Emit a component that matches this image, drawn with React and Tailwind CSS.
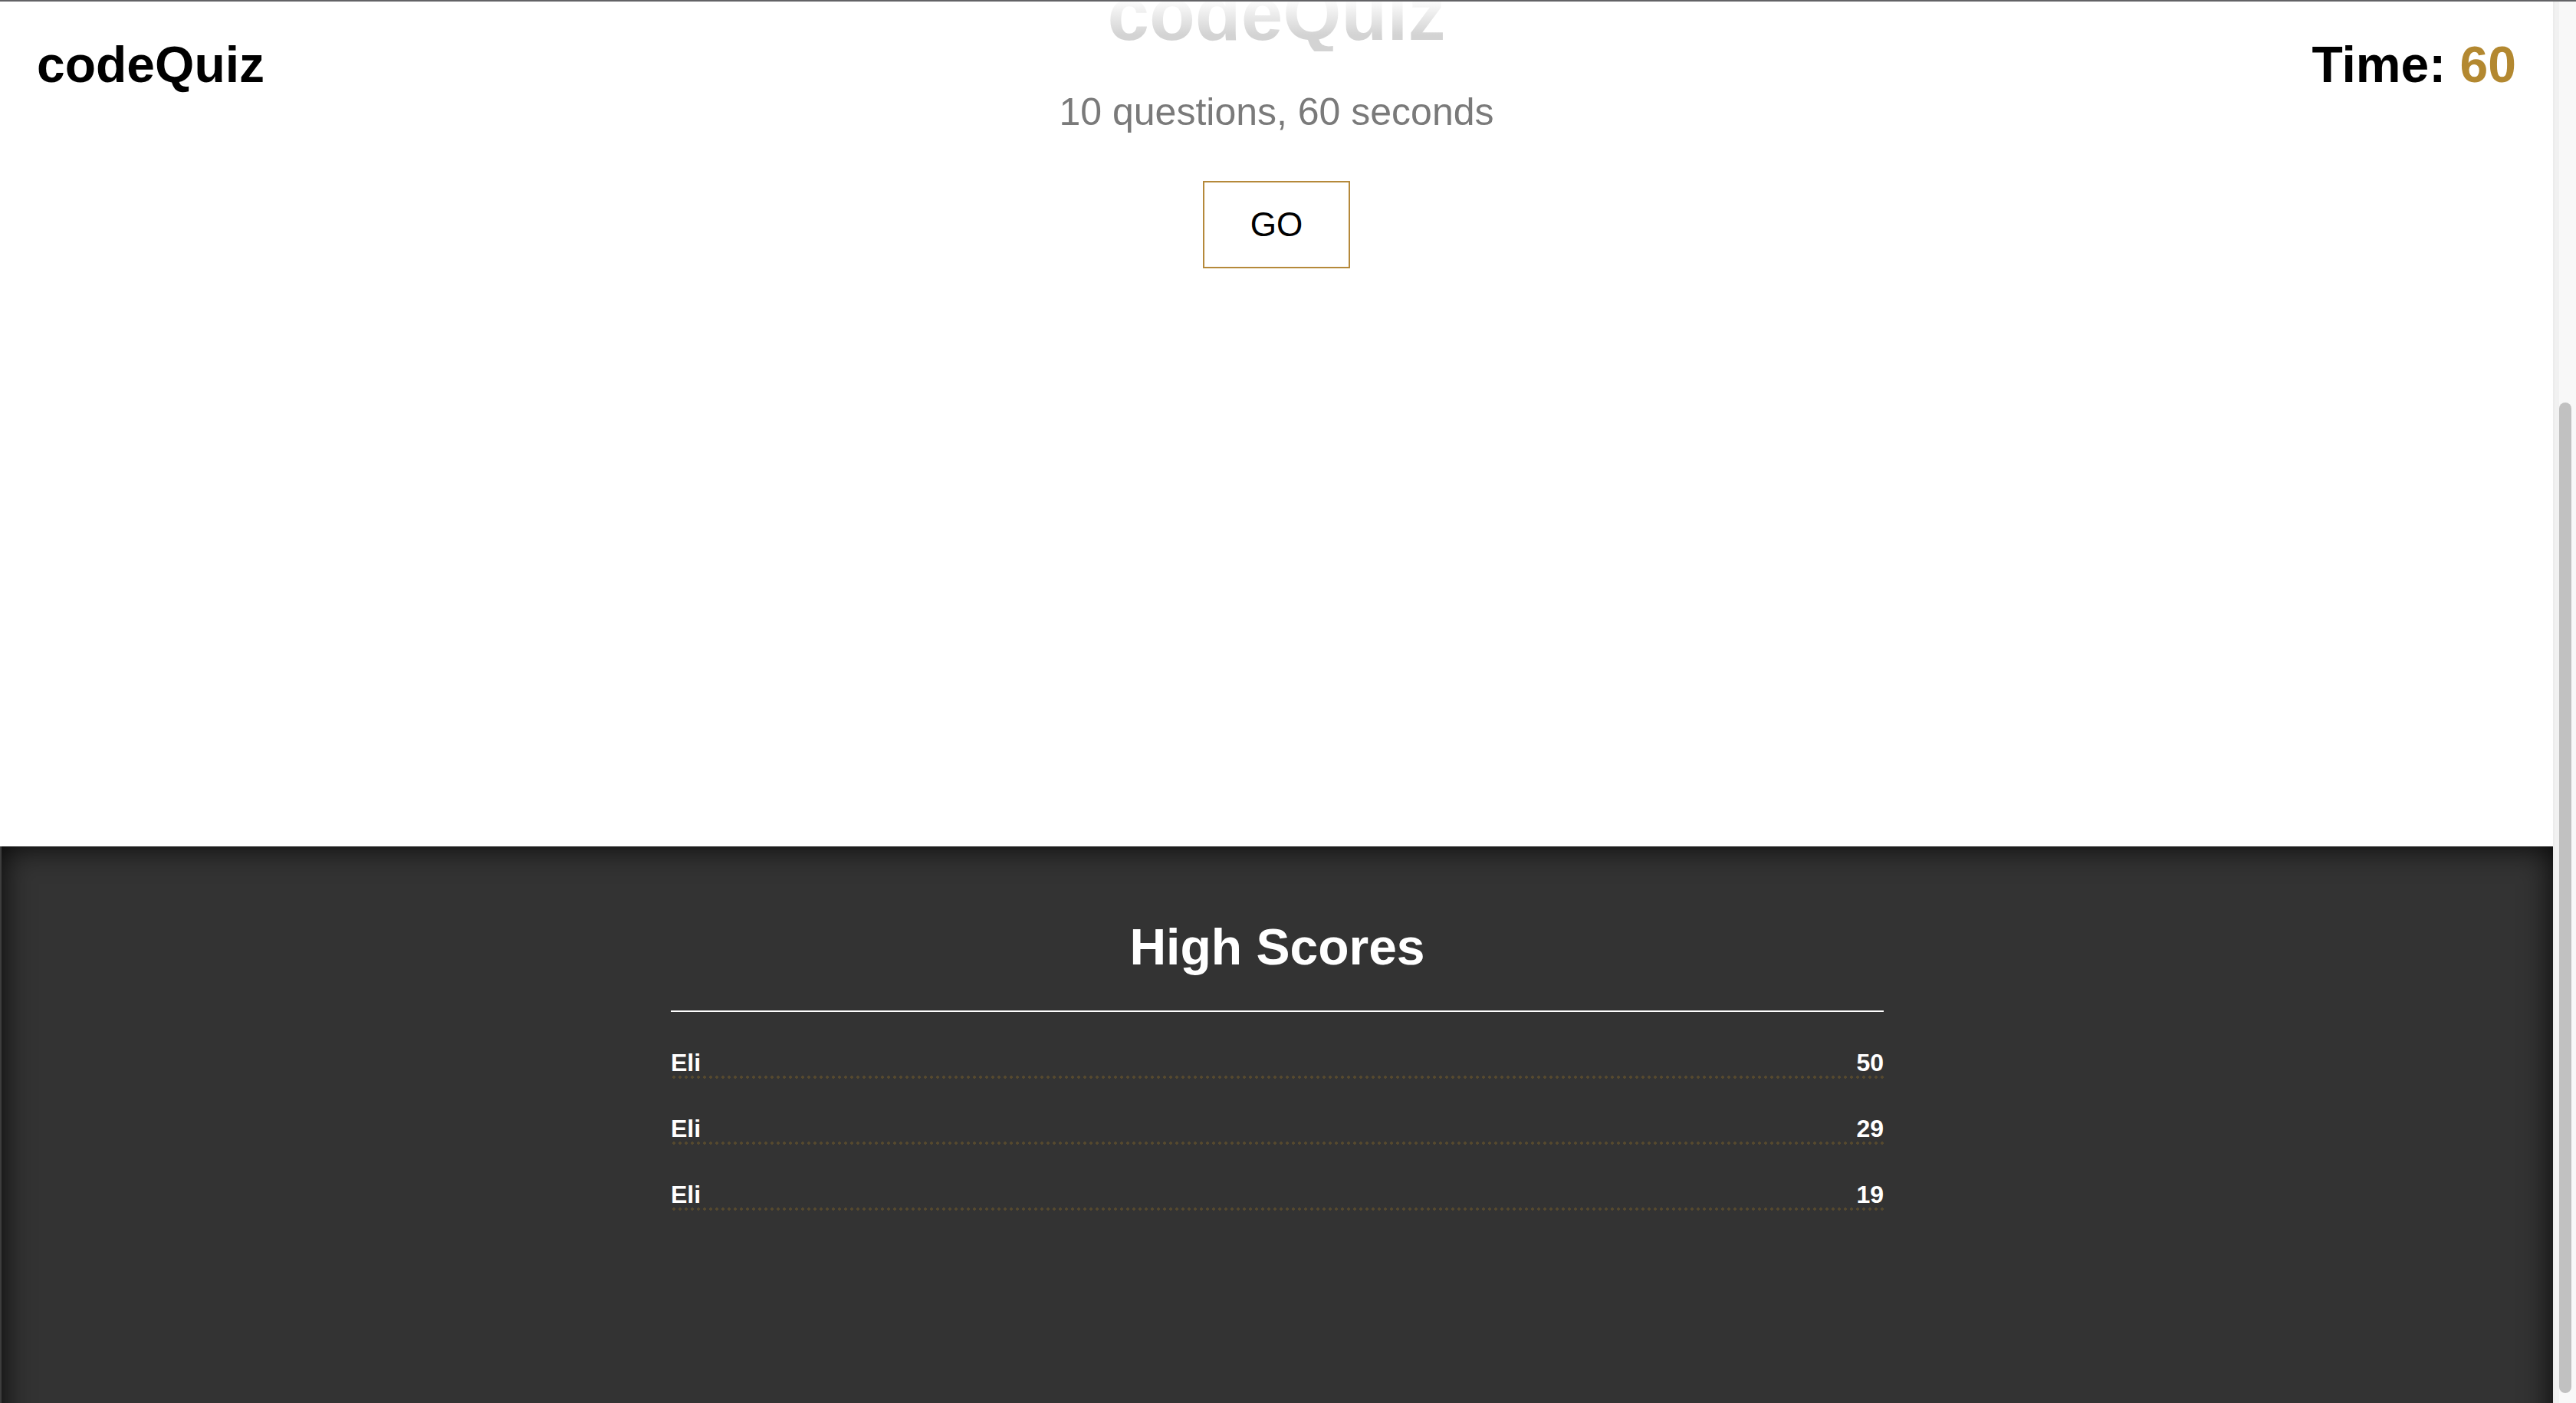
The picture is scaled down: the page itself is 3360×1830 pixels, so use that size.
import React from "react";

const scores = [
  { name: "Eli", score: 50 },
  { name: "Eli", score: 29 },
  { name: "Eli", score: 19 },
];

export default function App() {
  return (
    <div className="h-[1830px] w-[3360px] overflow-hidden bg-white font-['Liberation_Sans',Arial,sans-serif] flex flex-col">
      {/* window edge */}
      <div className="h-[2px] w-full bg-[#636366] shrink-0"></div>

      <div className="flex flex-1 min-h-0">
        <div className="relative flex-1 flex flex-col overflow-hidden">
          {/* fixed header */}
          <header className="absolute top-0 left-0 right-0 z-10 flex justify-between px-12 pt-[49px] text-[66px] font-bold leading-none text-black">
            <span>codeQuiz</span>
            <span>
              Time: <span className="text-[#b38830]">60</span>
            </span>
          </header>

          <main className="h-[1102px] shrink-0 flex flex-col items-center">
            <h1 className="mt-[-33px] text-[98px] font-bold leading-none text-transparent bg-clip-text bg-[linear-gradient(to_bottom,#ffffff_30%,#d3d3d3_78%)]">
              codeQuiz
            </h1>
            <p className="mt-[51px] text-[50px] leading-[57px] text-[#7a7a7a]">
              10 questions, 60 seconds
            </p>
            <button className="mt-[61px] w-[192px] h-[114px] border-2 border-[#b5893a] bg-white text-[44px] text-black flex items-center justify-center">
              GO
            </button>
          </main>

          <section className="h-[820px] shrink-0 bg-[#333333] border-l-2 border-[#3d3d3d] shadow-[inset_0_0_40px_rgba(0,0,0,0.9)] flex justify-center">
            <div className="w-[1582px] pt-[98px]">
              <h2 className="text-center text-[66px] font-bold leading-none text-white">High Scores</h2>
              <div className="mt-[50px] h-[2px] bg-white"></div>
              <ul className="mt-[49px]">
                {scores.map((s, i) => (
                  <li key={i} className="mb-[48px]">
                    <div className="flex justify-between text-[32px] font-bold leading-[34px] text-white">
                      <span>{s.name}</span>
                      <span>{s.score}</span>
                    </div>
                    <div className="h-[4px] bg-[radial-gradient(circle,#56492e_1.6px,transparent_2.1px)] bg-[length:8px_4px] bg-repeat-x"></div>
                  </li>
                ))}
              </ul>
            </div>
          </section>
        </div>

        {/* scrollbar */}
        <div className="w-[30px] shrink-0 bg-[#f8f8f8] border-l-2 border-[#ececec] flex">
          <div className="w-[6px] bg-[#f1f1f1]"></div>
          <div className="pt-[523px] pb-[13px] flex">
            <div className="w-[16px] rounded-full bg-[#c1c1c1]"></div>
          </div>
        </div>
      </div>
    </div>
  );
}
